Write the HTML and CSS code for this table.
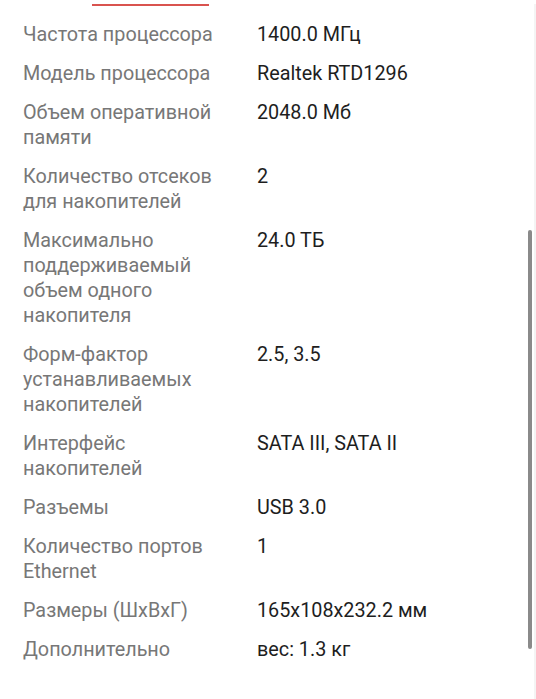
FILE: index.html
```html
<!DOCTYPE html>
<html lang="ru">
<head>
<meta charset="utf-8">
<link rel="stylesheet" href="styles.css">
</head>
<body>
<div class="page">
  <div class="tab-indicator"></div>
  <dl class="specs">
    <dt>Частота процессора</dt><dd>1400.0 МГц</dd>
    <dt>Модель процессора</dt><dd>Realtek RTD1296</dd>
    <dt>Объем оперативной памяти</dt><dd>2048.0 Мб</dd>
    <dt>Количество отсеков для накопителей</dt><dd>2</dd>
    <dt>Максимально поддерживаемый объем одного накопителя</dt><dd>24.0 ТБ</dd>
    <dt>Форм-фактор устанавливаемых накопителей</dt><dd>2.5, 3.5</dd>
    <dt>Интерфейс накопителей</dt><dd>SATA III, SATA II</dd>
    <dt>Разъемы</dt><dd>USB 3.0</dd>
    <dt>Количество портов Ethernet</dt><dd>1</dd>
    <dt>Размеры (ШхВхГ)</dt><dd>165x108x232.2 мм</dd>
    <dt>Дополнительно</dt><dd>вес: 1.3 кг</dd>
  </dl>
  <div class="scrollbar"></div>
</div>
</body>
</html>
```

FILE: styles.css
```css
html, body {
  margin: 0;
  padding: 0;
  background: #ffffff;
}
body {
  font-family: Roboto, "Noto Sans", sans-serif;
  width: 536px;
  height: 699px;
  overflow: hidden;
}
.page {
  position: relative;
  height: 699px;
  border-right: 2px solid #f4f4f4;
  box-sizing: border-box;
}
.tab-indicator {
  margin-left: 92px;
  margin-top: 4px;
  width: 117px;
  height: 2px;
  background: #d9534f;
}
.specs {
  margin: 0;
  padding: 16px 0 0 23px;
  display: grid;
  grid-template-columns: 208px 1fr;
  column-gap: 26px;
  row-gap: 14px;
  font-size: 19.8px;
  line-height: 25px;
}
.specs dt {
  color: #777777;
}
.specs dd {
  margin: 0;
  color: #1e1e1e;
}
.scrollbar {
  position: absolute;
  left: 528px;
  top: 226px;
  width: 4px;
  height: 419px;
  border-radius: 2px;
  background: #8a8a8a;
}
```
